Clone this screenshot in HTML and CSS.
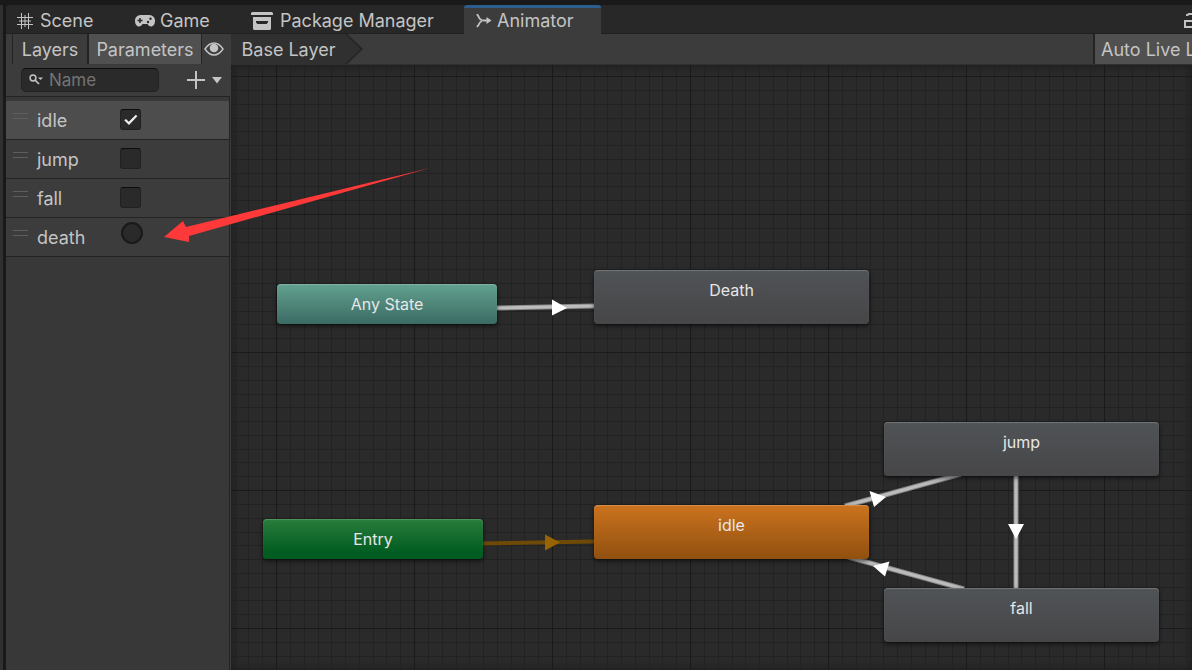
FILE: index.html
```html
<!DOCTYPE html>
<html lang="en">
<head>
<meta charset="utf-8">
<title>Animator</title>
<link rel="stylesheet" href="styles.css">
</head>
<body>
<div class="editor">
  <div class="neighbor"></div>
  <main class="panel">
    <nav class="tabs">
      <button class="tab tab-scene" type="button">
        <svg class="icon" width="16" height="16" viewBox="0 0 16 16"><path d="M4.500 0v16M11.500 0v16M8 2v12M0 4.500h16M0 11.500h16M2 8h12" stroke="#c4c4c4" stroke-width="1" fill="none"/></svg>
        Scene
      </button>
      <button class="tab tab-game" type="button">
        <svg class="icon" width="20" height="12" viewBox="0 0 20 12"><path fill="#c4c4c4" fill-rule="evenodd" d="M5.500 0h9a5.700 5.700 0 0 1 5.500 6c0 3-1.800 5.500-4 5.500-1.500 0-2.800-1-3.500-2.500h-5C6.800 10.500 5.500 11.500 4 11.500 1.800 11.500 0 9 0 6a5.700 5.700 0 0 1 5.500-6z"/><path d="M5 3v5M2.500 5.500h5" stroke="#282828" stroke-width="1.500"/><circle cx="15.500" cy="3.700" r="1.200" fill="#282828"/><circle cx="13" cy="7" r="1.200" fill="#282828"/></svg>
        Game
      </button>
      <button class="tab tab-package" type="button">
        <svg class="icon" width="22" height="18" viewBox="0 0 22 18"><path fill="#c4c4c4" fill-rule="evenodd" d="M1.500 0h19a1.500 1.500 0 0 1 1.500 1.500V3H0V1.500A1.500 1.500 0 0 1 1.500 0zM2 5h18v11.500a1.500 1.500 0 0 1-1.500 1.500h-15A1.500 1.500 0 0 1 2 16.500zM5 9v1.500l1.500 1.500h9l1.500-1.500V9z"/></svg>
        Package Manager
      </button>
      <button class="tab tab-active" type="button">
        <svg class="icon" width="16" height="14" viewBox="0 0 16 14"><g fill="none" stroke="#c4c4c4" stroke-width="1.800"><path d="M1 0l1.500 2.500Q4 6.500 8 6.500h4"/><path d="M1 13l1.500-2Q3.500 8 6 7"/></g><path d="M10.500 3l5 3.500-5 3.500z" fill="#c4c4c4"/></svg>
        Animator
      </button>
      <button class="lock" type="button" aria-label="Lock"><svg width="14" height="16" viewBox="0 0 14 16"><path d="M3 3V2l2-1h5l2 2v5M1 8h11v6H1z" fill="none" stroke="#c4c4c4" stroke-width="2"/></svg></button>
    </nav>
    <div class="work">
      <aside class="sidebar">
        <div class="modes">
          <button class="mode" type="button">Layers</button>
          <button class="mode mode-on" type="button">Parameters</button>
          <button class="eye" type="button" aria-label="Toggle visibility"><svg width="20" height="14" viewBox="0 0 20 14"><path d="M1 7Q5 1 10 1t9 6q-4 6-9 6T1 7z" fill="none" stroke="#c4c4c4" stroke-width="1.400"/><circle cx="10" cy="6" r="4.300" fill="#c4c4c4"/></svg></button>
        </div>
        <div class="search-row">
          <label class="search">
            <svg width="14" height="11" viewBox="0 0 14 11"><circle cx="4" cy="4" r="2.900" fill="none" stroke="#c4c4c4" stroke-width="1.500"/><path d="M6 6l4 4" stroke="#c4c4c4" stroke-width="1.700"/><path d="M9 3.500h5L11.500 6z" fill="#c4c4c4"/></svg>
            <input class="search-input" type="text" placeholder="Name" aria-label="Search by name">
          </label>
          <button class="add" type="button" aria-label="Add parameter"><svg width="36" height="18" viewBox="0 0 36 18"><path d="M9 0v18M0 9h18" stroke="#c4c4c4" stroke-width="2"/><path d="M25 6h10l-5 6.500z" fill="#c4c4c4"/></svg></button>
        </div>
        <div class="params">
          <label class="param param-selected"><span class="grip"></span><span class="param-name">idle</span><input class="box" type="checkbox" checked></label>
          <label class="param"><span class="grip"></span><span class="param-name">jump</span><input class="box" type="checkbox"></label>
          <label class="param"><span class="grip"></span><span class="param-name">fall</span><input class="box" type="checkbox"></label>
          <label class="param"><span class="grip"></span><span class="param-name">death</span><input class="trigger" type="radio"></label>
        </div>
      </aside>
      <section class="graph">
        <div class="toolbar">
          <button class="crumb" type="button">Base Layer</button>
          <svg class="crumb-end" width="17" height="30" viewBox="0 0 17 30"><path d="M0 0l16 15L0 30z" fill="#303030"/><path d="M0 0l16 15L0 30" fill="none" stroke="#232323" stroke-width="1.500"/></svg>
          <button class="live" type="button">Auto Live Link</button>
        </div>
        <div class="canvas">
          <svg class="wires" width="100%" height="100%">
            <defs>
              <pattern id="grid" x="45" y="11" width="138" height="138" patternUnits="userSpaceOnUse">
                <path fill="#222222" d="M14 0h1v138h-1zM28 0h1v138h-1zM42 0h1v138h-1zM55 0h1v138h-1zM69 0h1v138h-1zM83 0h1v138h-1zM97 0h1v138h-1zM110 0h1v138h-1zM124 0h1v138h-1zM0 14h138v1H0zM0 28h138v1H0zM0 42h138v1H0zM0 55h138v1H0zM0 69h138v1H0zM0 83h138v1H0zM0 97h138v1H0zM0 110h138v1H0zM0 124h138v1H0z"/>
                <path fill="#1a1a1a" d="M0 0h1v138H0zM0 0h138v1H0z"/>
              </pattern>
            </defs>
            <rect width="100%" height="100%" fill="url(#grid)"/>
            <g stroke="#8a8a8a" stroke-width="5"><path d="M266 243l97-2M614 441l116-32M785 411v112M617 492l116 32"/></g>
            <g stroke="#bcbcbc" stroke-width="3"><path d="M266 243l97-2M614 441l116-32M785 411v112M617 492l116 32"/></g>
            <path d="M252 478.500l111-2" stroke="#6f4a06" stroke-width="4"/>
            <path fill="#ffffff" d="M321 234.500v16l15-7.500zM638.500 426l4.500 16 12-10zM777 459h16l-8 15zM658.500 496.500l-4.500 15-12-10.500z"/>
            <path fill="#966403" d="M314 469.500v16l15-8z"/>
          </svg>
          <div class="node any">Any State</div>
          <div class="node death">Death</div>
          <div class="node entry">Entry</div>
          <div class="node idle">idle</div>
          <div class="node jump">jump</div>
          <div class="node fall">fall</div>
        </div>
      </section>
    </div>
  </main>
  <svg class="pointer" width="268" height="76" viewBox="0 0 268 76"><path d="M0 70L19 54l3 6L266 1 25 69l0 6z" fill="#fe3939"/></svg>
</div>
</body>
</html>
```
FILE: styles.css
```css
* { box-sizing: border-box; }
body {
  margin: 0;
  background: #191919;
  color: #c4c4c4;
  font: 18px/24px Inter, sans-serif;
  font-optical-sizing: none;
}
button {
  margin: 0;
  padding: 0;
  border: 0;
  background: none;
  color: inherit;
  font: inherit;
  font-optical-sizing: none;
  white-space: nowrap;
}
svg { display: block; flex: none; }
.editor {
  position: relative;
  display: flex;
  gap: 3px;
  height: 100vh;
  padding-top: 5px;
  overflow: hidden;
}
.neighbor { width: 3px; background: #303030; }
.panel { flex: 1; min-width: 0; display: flex; flex-direction: column; }
.tabs {
  display: flex;
  height: 29px;
  background: #282828;
  border-bottom: 1px solid #202020;
  border-top-left-radius: 3px;
}
.tab {
  display: flex;
  align-items: center;
  padding: 3px 12px 0;
  gap: 5px;
}
.tab-scene { width: 117px; gap: 7px; padding-left: 11px; }
.tab-game { width: 116px; }
.tab-package { width: 225px; gap: 7px; }
.tab-active {
  width: 137px;
  height: 29px;
  padding-top: 0;
  border-top: 3px solid #2c5d8c;
  border-radius: 3px 3px 0 0;
  background: #3c3c3c;
}
.lock { margin-left: auto; width: 8px; overflow: hidden; padding-top: 4px; }
.work { flex: 1; min-height: 0; display: flex; }
.sidebar {
  width: 225px;
  background: #383838;
  border-right: 1px solid #3c3c3c;
  box-shadow: inset -1px 0 #232323;
}
.modes { display: flex; height: 30px; padding-left: 6px; background: #3c3c3c; }
.mode { width: 75px; padding-top: 1px; border-left: 1px solid #232323; }
.mode-on {
  width: 115px;
  background: #505050;
  border-left: 2px solid #232323;
  border-right: 1px solid #232323;
}
.eye { padding-left: 2px; }
.search-row {
  display: flex;
  align-items: center;
  justify-content: space-between;
  height: 33px;
  padding: 0 7px 1px 15px;
  background: #3c3c3c;
  border-bottom: 1px solid #232323;
}
.search {
  display: flex;
  align-items: center;
  gap: 6px;
  width: 138px;
  height: 24px;
  padding-left: 7px;
  background: #2a2a2a;
  border: 1px solid #212121;
  border-top-color: #0d0d0d;
  border-radius: 5px;
}
.search-input {
  min-width: 0;
  flex: 1;
  padding: 0;
  border: 0;
  outline: 0;
  background: none;
  color: #c4c4c4;
  font: inherit;
  font-optical-sizing: none;
  font-size: 17px;
}
.search-input::placeholder { color: #747474; }
.params { padding-top: 4px; margin-right: 1px; }
.param {
  display: flex;
  height: 39px;
  padding: 8px 7px 0;
  background: #3c3c3c;
  border-bottom: 1px solid #232323;
}
.param-selected { background: #4d4d4d; }
.grip {
  width: 15px;
  height: 6px;
  margin: 4px 9px 0 0;
  border-top: 1px solid #5e5e5e;
  border-bottom: 1px solid #5e5e5e;
}
.param-name { width: 83px; }
.box, .trigger {
  appearance: none;
  width: 21px;
  height: 21px;
  margin: 0;
  background: #2a2a2a;
  border: 1px solid #212121;
  border-top-color: #0d0d0d;
  border-radius: 3px;
}
.box:checked::before {
  content: "";
  display: block;
  height: 19px;
  background: #eeeeee;
  clip-path: polygon(17% 54%, 26% 47%, 41% 62%, 78% 25%, 86% 33%, 42% 79%);
}
.trigger { width: 22px; height: 22px; margin-left: 1px; margin-top: -4px; border: 2px solid #191919; border-radius: 50%; }
.graph { flex: 1; min-width: 0; display: flex; flex-direction: column; }
.toolbar { display: flex; height: 31px; background: #3c3c3c; border-bottom: 1px solid #303030; }
.crumb { width: 115px; padding-top: 1px; background: #303030; }
.live {
  width: 99px;
  margin-left: auto;
  padding: 1px 0 0 6px;
  overflow: hidden;
  text-align: left;
  background: #505050;
  border-left: 2px solid #232323;
}
.canvas {
  position: relative;
  flex: 1;
  overflow: hidden;
  background: #2a2a2a;
  box-shadow: inset 0 0 8px #191919;
}
.wires { position: absolute; inset: 0; }
.node {
  position: absolute;
  width: 275px;
  height: 54px;
  border-radius: 4px;
  color: #e6e6e6;
  font-size: 16px;
  line-height: 40px;
  text-align: center;
  background: linear-gradient(#505356, #464648);
  box-shadow: inset 0 1px 1px #ffffff33, 0 2px 4px #00000099;
}
.any { left: 46px; top: 219px; width: 220px; height: 40px; background: linear-gradient(#62a18f, #3b6b64); }
.entry { left: 32px; top: 454px; width: 220px; height: 40px; background: linear-gradient(#297c3c, #005c20 85%); }
.death { left: 363px; top: 205px; }
.idle { left: 363px; top: 440px; background: linear-gradient(#cb731e, #91500f); }
.jump { left: 653px; top: 357px; }
.fall { left: 653px; top: 523px; }
.pointer { position: absolute; left: 164px; top: 167px; }
```
